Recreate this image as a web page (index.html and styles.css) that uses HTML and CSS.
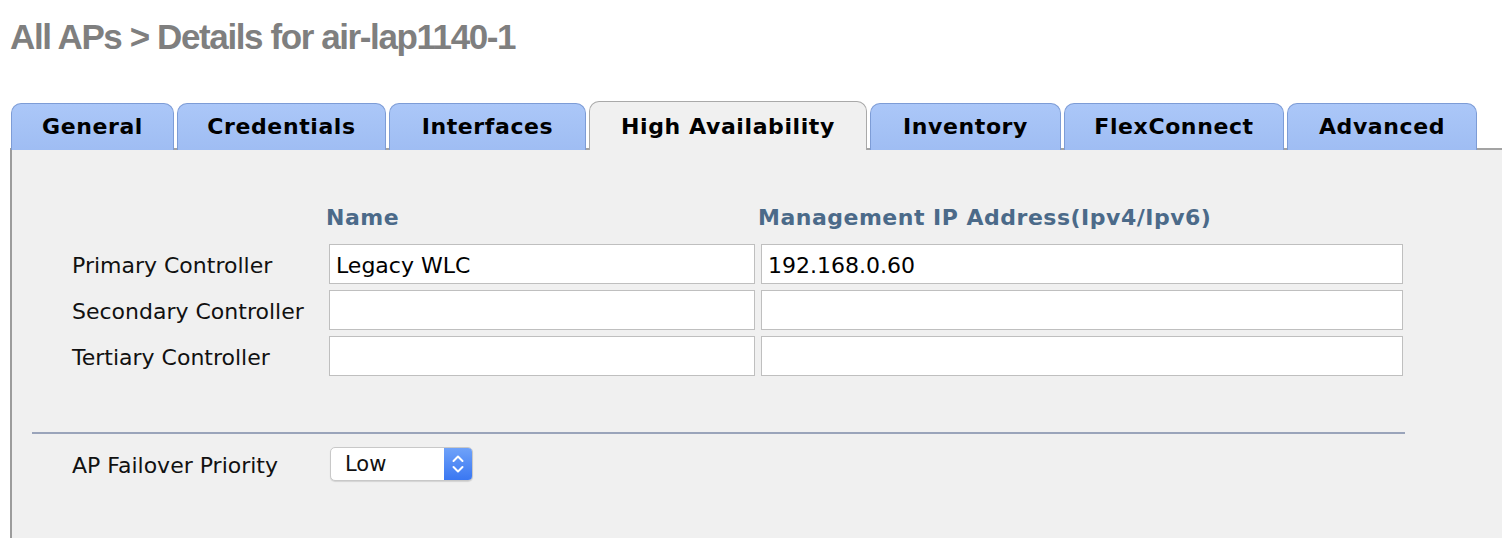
FILE: index.html
```html
<!DOCTYPE html>
<html lang="en">
  <head>
    <meta charset="UTF-8" />
    <meta name="viewport" content="width=device-width, initial-scale=1.0" />
    <title>AP Details</title>
    <link rel="stylesheet" href="styles.css">
  </head>

  <body>
    <h1 class="page-title">All APs &gt; Details for air-lap1140-1</h1>

    <ul class="tabs">
      <li class="tab tab-general">General</li>
      <li class="tab tab-credentials">Credentials</li>
      <li class="tab tab-interfaces">Interfaces</li>
      <li class="tab tab-ha active">High Availability</li>
      <li class="tab tab-inventory">Inventory</li>
      <li class="tab tab-flex">FlexConnect</li>
      <li class="tab tab-advanced">Advanced</li>
    </ul>

    <div class="panel">
      <div class="controllers">
        <div></div>
        <div class="col-head">Name</div>
        <div class="col-head">Management IP Address(Ipv4/Ipv6)</div>

        <label class="field-label">Primary Controller</label>
        <input class="text-field" type="text" value="Legacy WLC" />
        <input class="text-field" type="text" value="192.168.0.60" />

        <label class="field-label">Secondary Controller</label>
        <input class="text-field" type="text" value="" />
        <input class="text-field" type="text" value="" />

        <label class="field-label">Tertiary Controller</label>
        <input class="text-field" type="text" value="" />
        <input class="text-field" type="text" value="" />
      </div>

      <hr class="separator" />

      <div class="failover">
        <label class="field-label">AP Failover Priority</label>
        <div class="select">
          <span class="select-value">Low</span>
          <span class="select-arrow">
            <svg width="14" height="22" viewBox="0 0 14 22">
              <path d="M2.5 8 L7 3.5 L11.5 8" fill="none" stroke="#fff" stroke-width="2" stroke-linecap="round" stroke-linejoin="round" />
              <path d="M2.5 14 L7 18.5 L11.5 14" fill="none" stroke="#fff" stroke-width="2" stroke-linecap="round" stroke-linejoin="round" />
            </svg>
          </span>
        </div>
      </div>
    </div>
  </body>
</html>
```

FILE: styles.css
```css
body {
  margin: 0;
  background: #fff;
  font-family: "DejaVu Sans", Verdana, sans-serif;
  color: #111;
  overflow: hidden;
}

.page-title {
  margin: 17px 0 0 10px;
  font-family: "Liberation Sans", Arial, sans-serif;
  font-size: 35px;
  line-height: 40px;
  letter-spacing: -1.4px;
  font-weight: bold;
  color: #7f7f7f;
}

.tabs {
  display: flex;
  align-items: flex-end;
  gap: 3px;
  list-style: none;
  margin: 44px 0 -2px 11px;
  padding: 0;
  position: relative;
  z-index: 1;
}

.tab {
  box-sizing: border-box;
  height: 47px;
  display: flex;
  align-items: center;
  justify-content: center;
  padding-bottom: 2px;
  border: 1px solid #7d9cd6;
  border-bottom: none;
  border-radius: 10px 10px 0 0;
  background: linear-gradient(#abc7f8, #9fbdf3);
  font-size: 22px;
  font-weight: bold;
  letter-spacing: 0.6px;
  color: #000;
}

.tab.active {
  height: 49px;
  padding-bottom: 0;
  border-color: #a9a9a9;
  background: #f0f0f0;
}

.tab-general { width: 163px; }
.tab-credentials { width: 209px; }
.tab-interfaces { width: 197px; }
.tab-ha { width: 278px; }
.tab-inventory { width: 191px; }
.tab-flex { width: 220px; }
.tab-advanced { width: 190px; }

.panel {
  margin-left: 10px;
  min-height: 333px;
  background: #f0f0f0;
  border-top: 2px solid #a3a3a3;
  border-left: 2px solid #9c9c9c;
  padding: 55px 0 0 60px;
}

.controllers {
  display: grid;
  grid-template-columns: 251px 426px 642px;
  grid-template-rows: 33px 40px 40px 40px;
  column-gap: 6px;
  row-gap: 6px;
  align-items: center;
}

.col-head {
  align-self: start;
  margin-left: -3px;
  font-size: 22px;
  line-height: 26px;
  font-weight: bold;
  color: #4b6a89;
  white-space: nowrap;
  letter-spacing: 0.5px;
}

.field-label {
  padding-top: 3px;
  font-size: 22px;
  color: #111;
  white-space: nowrap;
}

.text-field {
  box-sizing: border-box;
  width: 100%;
  height: 40px;
  margin: 0;
  padding: 2px 6px 0;
  border: 1px solid #bfbfbf;
  border-radius: 0;
  background: #fff;
  font-family: "DejaVu Sans", Verdana, sans-serif;
  font-size: 22px;
  color: #000;
  outline: none;
}

.separator {
  margin: 56px 0 0 -40px;
  width: 1373px;
  height: 2px;
  border: none;
  background: #9aa4ba;
}

.failover {
  display: grid;
  grid-template-columns: 251px auto;
  column-gap: 6px;
  align-items: center;
  margin-top: 13px;
}

.select {
  box-sizing: border-box;
  width: 143px;
  height: 34px;
  margin-left: 1px;
  display: flex;
  border: 1px solid #c8c8c8;
  border-radius: 5px;
  background: #fff;
  box-shadow: 0 1px 1px rgba(0, 0, 0, 0.12);
  overflow: hidden;
}

.select-value {
  flex: 1;
  display: flex;
  align-items: center;
  padding-left: 14px;
  font-size: 21px;
  color: #111;
}

.select-arrow {
  width: 28px;
  display: flex;
  align-items: center;
  justify-content: center;
  background: linear-gradient(#6fa2f9, #3a77f2);
}
```
